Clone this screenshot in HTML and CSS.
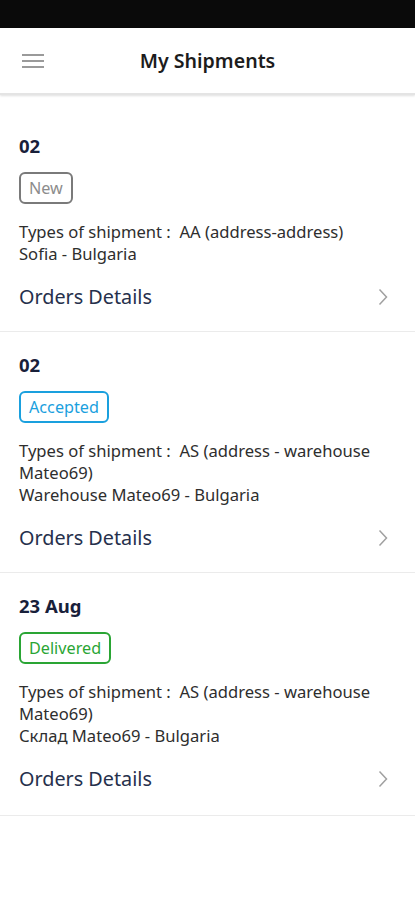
FILE: index.html
```html
<html>
<head>
	<title>My Shipments</title>
	<meta http-equiv="Content-Type" content="text/html; charset=UTF-8">
	<meta name="viewport" content="initial-scale=1.0, width=device-width">
	<link rel="stylesheet" href="styles.css">
</head>
<body>
	<div class="status-bar"></div>
	<div class="header">
		<div class="menu-button">
			<svg width="22" height="14" viewBox="0 0 22 14">
				<rect x="0" y="0" width="22" height="2" fill="#9a9a9a"/>
				<rect x="0" y="6" width="22" height="2" fill="#9a9a9a"/>
				<rect x="0" y="12" width="22" height="2" fill="#9a9a9a"/>
			</svg>
		</div>
		<div class="header-title">My Shipments</div>
	</div>

	<div class="shipment-list">
		<div class="shipment">
			<div class="shipment-date">02</div>
			<div class="status status-new">New</div>
			<div class="shipment-info">
				<div>Types of shipment :&nbsp; AA (address-address)</div>
				<div>Sofia - Bulgaria</div>
			</div>
			<div class="details-row">
				<span>Orders Details</span>
				<svg class="chevron" width="10" height="18" viewBox="0 0 10 18"><path d="M1.5 1.5 L8.5 9 L1.5 16.5" fill="none" stroke="#a0a0a0" stroke-width="1.5"/></svg>
			</div>
		</div>

		<div class="shipment">
			<div class="shipment-date">02</div>
			<div class="status status-accepted">Accepted</div>
			<div class="shipment-info">
				<div>Types of shipment :&nbsp; AS (address - warehouse Mateo69)</div>
				<div>Warehouse Mateo69 - Bulgaria</div>
			</div>
			<div class="details-row">
				<span>Orders Details</span>
				<svg class="chevron" width="10" height="18" viewBox="0 0 10 18"><path d="M1.5 1.5 L8.5 9 L1.5 16.5" fill="none" stroke="#a0a0a0" stroke-width="1.5"/></svg>
			</div>
		</div>

		<div class="shipment">
			<div class="shipment-date">23 Aug</div>
			<div class="status status-delivered">Delivered</div>
			<div class="shipment-info">
				<div>Types of shipment :&nbsp; AS (address - warehouse Mateo69)</div>
				<div>Склад Mateo69 - Bulgaria</div>
			</div>
			<div class="details-row">
				<span>Orders Details</span>
				<svg class="chevron" width="10" height="18" viewBox="0 0 10 18"><path d="M1.5 1.5 L8.5 9 L1.5 16.5" fill="none" stroke="#a0a0a0" stroke-width="1.5"/></svg>
			</div>
		</div>
	</div>
</body>
</html>
```

FILE: styles.css
```css
body {
	margin: 0;
	padding: 0;
	background-color: white;
	font-family: "Noto Sans", "Open Sans", sans-serif;
}

.status-bar {
	height: 28px;
	background-color: #0a0a0a;
}

.header {
	position: relative;
	display: flex;
	align-items: center;
	justify-content: center;
	height: 65px;
	border-bottom: 2px solid #e4e4e4;
	box-shadow: 0 1px 2px rgba(0,0,0,0.12);
}

.menu-button {
	position: absolute;
	left: 22px;
	top: 26px;
	line-height: 0;
}

.header-title {
	font-size: 19.6px;
	font-weight: 600;
	color: #1c1c1c;
}

.shipment-list {
	padding-top: 18px;
}

.shipment {
	padding: 22px 19px 21px 19px;
	border-bottom: 1px solid #ebebeb;
}

.shipment:last-child {
	padding-bottom: 23px;
}

.shipment-date {
	font-size: 18.5px;
	font-weight: 700;
	color: #18203a;
	line-height: 22px;
}

.status {
	display: inline-block;
	margin-top: 15px;
	padding: 0 8px;
	height: 28px;
	line-height: 28px;
	font-size: 16.2px;
	border: 2px solid;
	border-radius: 6px;
}

.status-new {
	color: #8c8c8c;
	border-color: #7a7a7a;
}

.status-accepted {
	color: #1aa0de;
	border-color: #1aa0de;
}

.status-delivered {
	color: #2aa534;
	border-color: #2aa534;
}

.shipment-info {
	margin-top: 17px;
	font-size: 16.6px;
	line-height: 22px;
	color: #2e2e2e;
}

.details-row {
	display: flex;
	align-items: center;
	justify-content: space-between;
	margin-top: 19px;
	padding-right: 8px;
	font-size: 19.8px;
	line-height: 26px;
	color: #26304c;
}
```
